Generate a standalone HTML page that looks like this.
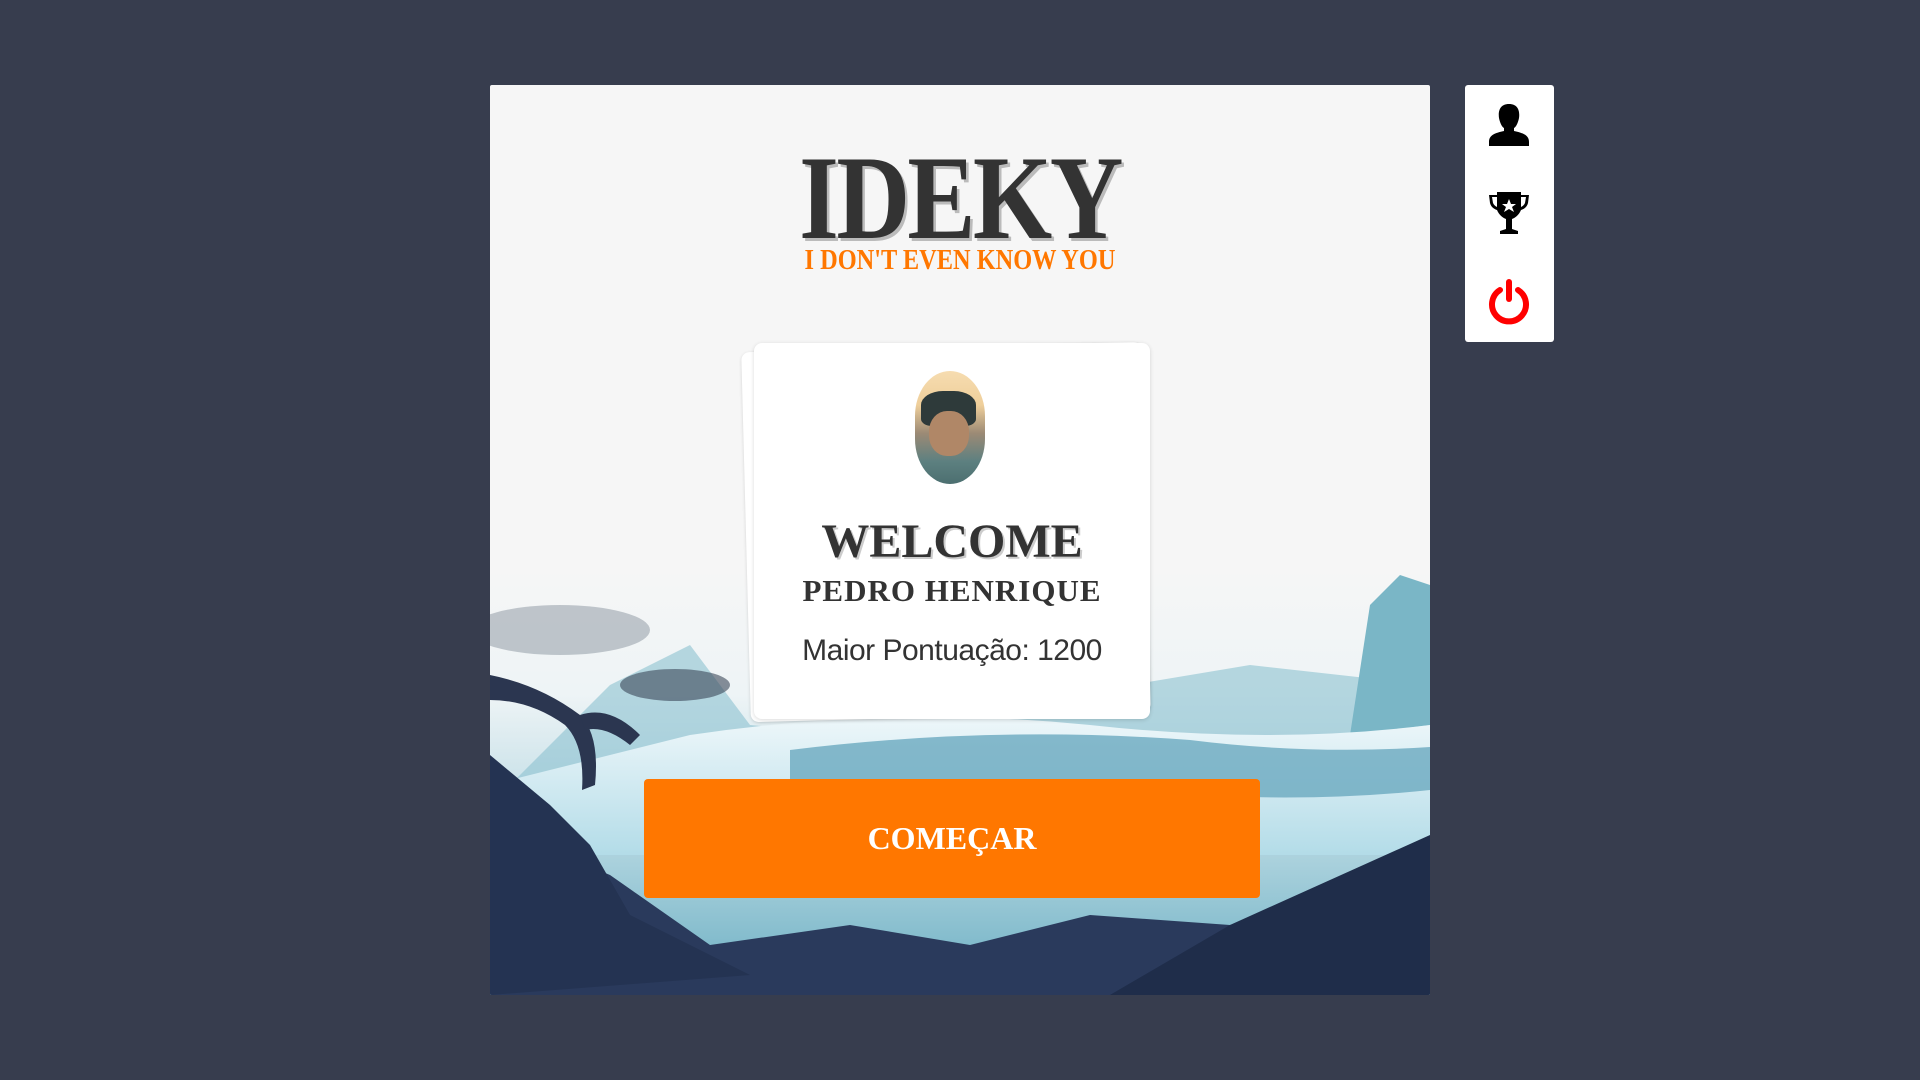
<!DOCTYPE html>
<html><head><meta charset="utf-8"><style>
html,body{margin:0;padding:0;width:1920px;height:1080px;background:#373d4e;overflow:hidden;font-family:"Liberation Sans",sans-serif}
#main{position:absolute;left:490px;top:85px;width:940px;height:910px;background:#f6f6f6;overflow:hidden;border-radius:2px}
#side{position:absolute;left:1465px;top:85px;width:89px;height:257px;background:#fff;border-radius:3px}
.logo{position:absolute;left:0;width:940px;text-align:center;font-family:"Liberation Serif",serif;font-weight:bold;color:#333}
.card{position:absolute;background:#fff;border-radius:8px}
.t{position:absolute;left:0;width:100%;text-align:center}
#btn{position:absolute;left:154px;top:694px;width:616px;height:119px;background:#ff7700;border-radius:4px;color:#fff;font-family:"Liberation Serif",serif;font-weight:bold;font-size:32px;text-align:center;line-height:119px}
</style></head><body>
<div id="main">
<svg width="940" height="910" style="position:absolute;left:0;top:0">
<defs>
<linearGradient id="sky" x1="0" y1="0" x2="0" y2="1"><stop offset="0" stop-color="#f6f6f6"/><stop offset="0.3" stop-color="#eef4f6"/><stop offset="0.6" stop-color="#bcdbe4"/><stop offset="1" stop-color="#6aaec2"/></linearGradient>
<linearGradient id="wat" x1="0" y1="0" x2="0" y2="1"><stop offset="0" stop-color="#eef7fa"/><stop offset="1" stop-color="#b3dce8"/></linearGradient>
</defs>
<rect x="0" y="480" width="940" height="430" fill="url(#sky)"/>
<path d="M120 600 L200 560 L260 640 L380 650 L500 640 L640 600 L760 580 L940 600 L940 700 L0 720Z" fill="#8cc2d1" opacity="0.6"/>
<path d="M880 520 L910 490 L940 500 L940 640 L860 650Z" fill="#7ab6c6"/>
<path d="M200 650 Q400 620 600 640 Q780 660 940 640 L940 770 L0 770 L0 700Z" fill="url(#wat)"/>
<path d="M300 665 Q500 640 700 655 Q820 670 940 662 L940 705 Q800 720 640 705 Q480 695 300 705Z" fill="#6aa9bf" opacity="0.8"/>
<path d="M0 740 L120 790 L220 860 L360 840 L480 860 L600 830 L740 840 L940 780 L940 910 L0 910Z" fill="#2a3a5c"/>
<path d="M0 670 L60 720 L100 760 L140 830 L260 890 L0 910Z" fill="#243352"/>
<path d="M740 840 L940 750 L940 910 L620 910Z" fill="#1f2d4a"/>
<path d="M0 590 Q50 600 90 630 Q110 650 105 700 L92 705 Q95 660 75 640 Q40 615 0 615Z" fill="#2b3650"/>
<path d="M90 630 Q120 620 150 650 L140 660 Q115 640 95 645Z" fill="#2b3650"/>
<ellipse cx="70" cy="545" rx="90" ry="25" fill="#5c6b78" opacity="0.35"/>
<ellipse cx="185" cy="600" rx="55" ry="16" fill="#3b4658" opacity="0.6"/>
</svg>
<div class="logo" style="top:53px;font-size:120px;line-height:120px;letter-spacing:-3px;text-shadow:3px 3px 0 #bbb;transform:scaleX(0.85)">IDEKY</div>
<div class="logo" style="top:162px;font-size:28px;line-height:28px;color:#ff7700;transform:scaleX(0.87)">I DON'T EVEN KNOW YOU</div>
<div class="card" style="left:256px;top:262px;width:400px;height:370px;transform:rotate(-1.5deg);box-shadow:0 1px 3px rgba(0,0,0,.15)"></div>
<div class="card" style="left:264px;top:258px;width:396px;height:376px;box-shadow:0 1px 4px rgba(0,0,0,.15)">
<div style="position:absolute;left:161px;top:28px;width:70px;height:113px;overflow:hidden;border-radius:35px/45px;background:linear-gradient(#f6dcb0 0,#efcf9b 30%,#9c8a75 55%,#5d8080 80%,#4c6f70 100%)">
<div style="position:absolute;left:6px;top:20px;width:55px;height:35px;border-radius:40% 40% 20% 20%;background:#2e3a3a"></div>
<div style="position:absolute;left:14px;top:40px;width:40px;height:45px;border-radius:45%;background:#b08767"></div>
</div>
<div class="t" style="top:171px;font-family:'Liberation Serif',serif;font-weight:bold;font-size:48px;color:#333;text-shadow:2px 2px 0 #ccc">WELCOME</div>
<div class="t" style="top:230px;font-family:'Liberation Serif',serif;font-weight:bold;font-size:31px;color:#333;letter-spacing:1px">PEDRO HENRIQUE</div>
<div class="t" style="top:291px;font-size:30px;color:#333;letter-spacing:-.5px">Maior Pontuação: 1200</div>
</div>
<div id="btn">COMEÇAR</div>
</div>
<div id="side">
<svg width="89" height="257" viewBox="0 0 89 257">
<path d="M44 19 C35 19 33 26 34 33 C35 38 37 42 39 43 L39 46 C30 48 24 50 24 57 L24 61 L64 61 L64 57 C64 50 58 48 49 46 L49 43 C51 42 53 38 54 33 C55 26 53 19 44 19Z" fill="#000"/>
<path d="M32 107 L56 107 L56 110 L64 110 L63 118 C62 122 59 124 56 125 C54 130 50 133 47 134 L47 144 L53 146 L53 149 L35 149 L35 146 L41 144 L41 134 C38 133 34 130 32 125 C29 124 26 122 25 118 L24 110 L32 110Z M27 112 L28 118 C29 120 30 121 32 122 L32 112Z M61 112 L56 112 L56 122 C58 121 59 120 60 118Z" fill="#000"/>
<path d="M44 114 L46 119 L51 119 L47 122 L49 127 L44 124 L39 127 L41 122 L37 119 L42 119Z" fill="#fff"/>
<path d="M35 205 A17 17 0 1 0 53 205" fill="none" stroke="#f00" stroke-width="6" stroke-linecap="round"/>
<line x1="44" y1="197" x2="44" y2="214" stroke="#f00" stroke-width="6" stroke-linecap="round"/>
</svg>
</div>
</body></html>
